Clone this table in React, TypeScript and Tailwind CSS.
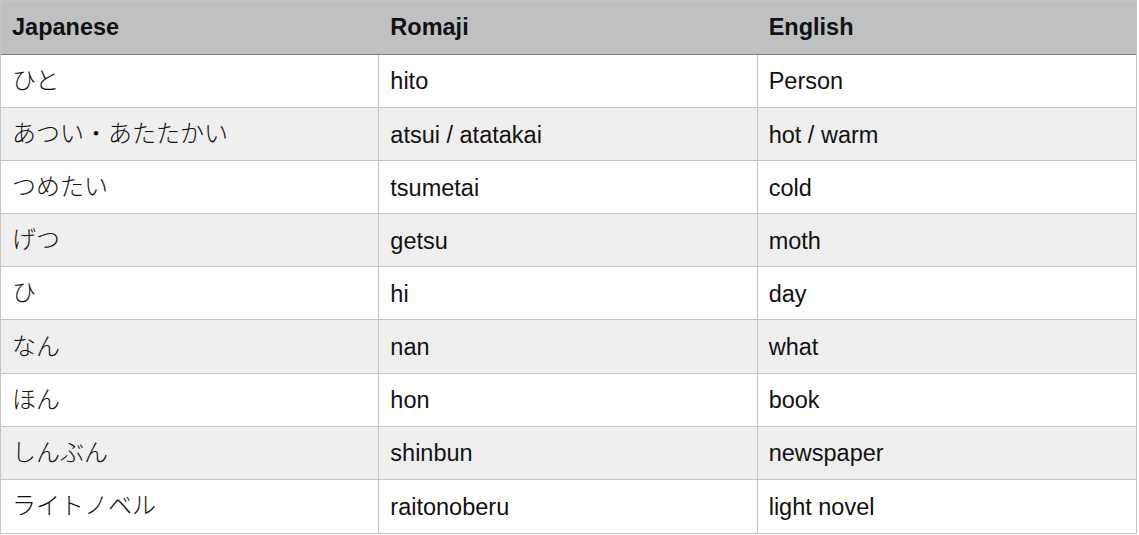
const rows = [
  { ja: "ひと", romaji: "hito", en: "Person" },
  { ja: "あつい・あたたかい", romaji: "atsui / atatakai", en: "hot / warm" },
  { ja: "つめたい", romaji: "tsumetai", en: "cold" },
  { ja: "げつ", romaji: "getsu", en: "moth" },
  { ja: "ひ", romaji: "hi", en: "day" },
  { ja: "なん", romaji: "nan", en: "what" },
  { ja: "ほん", romaji: "hon", en: "book" },
  { ja: "しんぶん", romaji: "shinbun", en: "newspaper" },
  { ja: "ライトノベル", romaji: "raitonoberu", en: "light novel" },
];

const font = { fontFamily: '"Liberation Sans", "Noto Sans CJK JP", sans-serif' };

export default function App() {
  return (
    <div className="bg-white w-[1139px] h-[535px]" style={font}>
      <div className="w-[1137px] border border-[#c6c6c6] text-[23.5px] text-[#111]">
        {/* Header */}
        <div className="grid grid-cols-3 h-[54px] bg-[#bec1c2] border-b border-[#7f7f7f] font-bold">
          <div className="flex items-center px-[11px]">Japanese</div>
          <div className="flex items-center px-[11px]">Romaji</div>
          <div className="flex items-center px-[11px]">English</div>
        </div>

        {rows.map((row, i) => (
          <div
            key={row.romaji}
            className={`grid grid-cols-3 h-[53.1px] ${i < rows.length - 1 ? "border-b border-[#c6c6c6]" : ""} ${i % 2 === 1 ? "bg-[#efefef]" : "bg-white"}`}
          >
            <div className="flex items-center px-[11px] border-r border-[#c6c6c6] font-light text-[24px]">{row.ja}</div>
            <div className="flex items-center px-[11px] pt-[2px] border-r border-[#c6c6c6]">{row.romaji}</div>
            <div className="flex items-center px-[11px] pt-[2px]">{row.en}</div>
          </div>
        ))}
      </div>
    </div>
  );
}
